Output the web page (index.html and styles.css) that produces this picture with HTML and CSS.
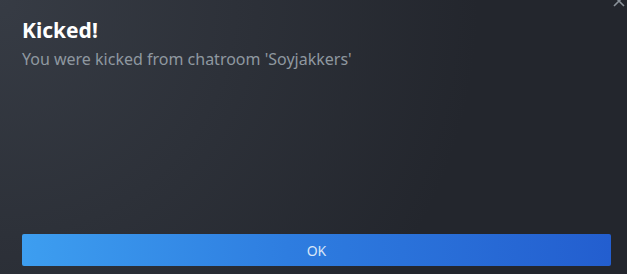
FILE: index.html
```html
<!DOCTYPE html>
<html>
<head>
<meta charset="utf-8">
<link rel="stylesheet" href="styles.css">
</head>
<body>
<div class="dialog">
  <button class="close" aria-label="Close">
    <svg width="12" height="12" viewBox="0 0 12 12"><path d="M1 1 L11 11 M11 1 L1 11" stroke="#8b929a" stroke-width="1.6" fill="none"/></svg>
  </button>
  <div class="content">
    <div class="title">Kicked!</div>
    <div class="desc">You were kicked from chatroom 'Soyjakkers'</div>
  </div>
  <div class="footer">
    <button class="ok">OK</button>
  </div>
</div>
</body>
</html>
```
FILE: styles.css
```css
html, body {
  margin: 0;
  padding: 0;
  height: 100%;
}
body {
  background: #25282e;
  font-family: "Noto Sans", "Open Sans", sans-serif;
  overflow: hidden;
}
.dialog {
  position: relative;
  box-sizing: border-box;
  height: 274px;
  padding: 16px 16px 8px 22px;
  display: flex;
  flex-direction: column;
  background: radial-gradient(circle at top left, rgba(74, 81, 92, 0.5) 0%, rgba(75, 81, 92, 0) 70%), #23262d;
}
.close {
  position: absolute;
  top: -5px;
  right: 2px;
  width: 12px;
  height: 12px;
  padding: 0;
  border: 0;
  background: none;
  display: flex;
}
.content {
  flex: 1;
}
.title {
  color: #ffffff;
  font-weight: 700;
  font-size: 21px;
  line-height: 28px;
}
.desc {
  color: #8f98a0;
  font-size: 16px;
  line-height: 22px;
  margin-top: 4px;
}
.footer {
  display: flex;
}
.ok {
  flex: 1;
  height: 32px;
  border: 0;
  border-radius: 2px;
  background: linear-gradient(to right, #3d9ef0 0%, #2e7de0 45%, #235ecf 100%);
  color: #d8e6f7;
  font-family: "Noto Sans", "Open Sans", sans-serif;
  font-size: 14px;
  padding: 0;
}
```
